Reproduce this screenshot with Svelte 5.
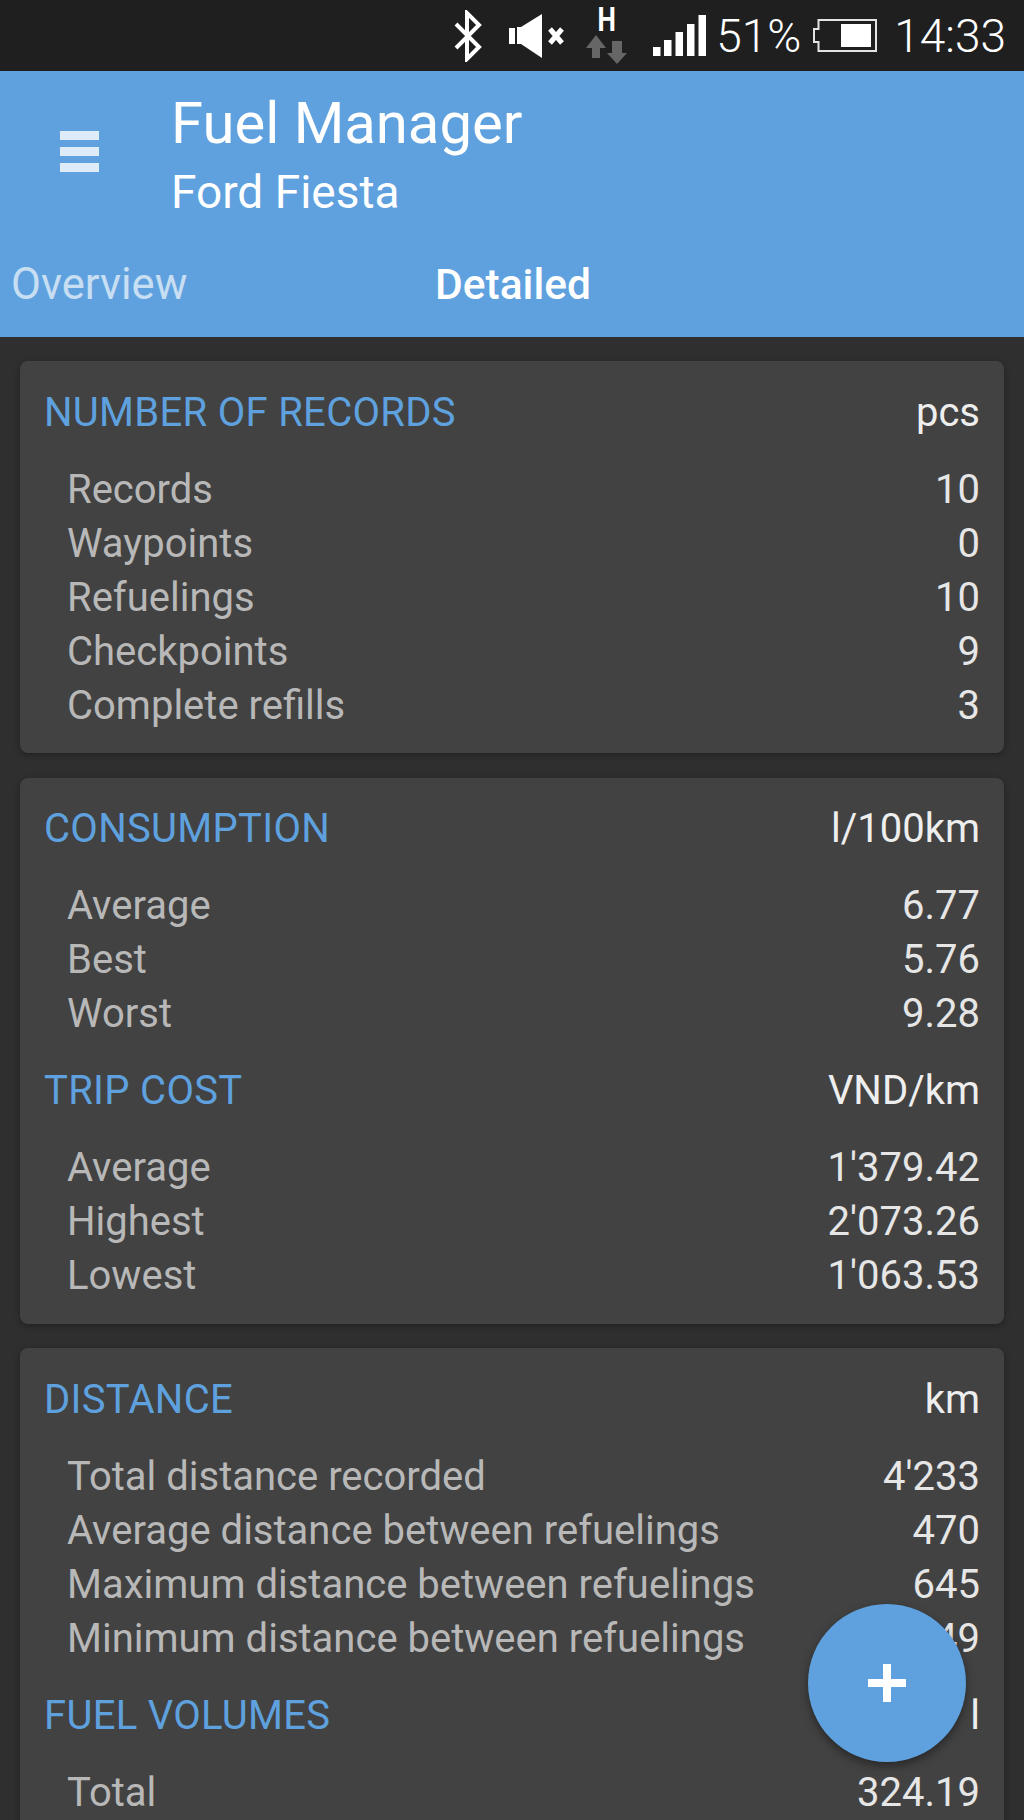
<script>
	const cards = [
		[
			{
				title: 'NUMBER OF RECORDS',
				unit: 'pcs',
				rows: [
					['Records', '10'],
					['Waypoints', '0'],
					['Refuelings', '10'],
					['Checkpoints', '9'],
					['Complete refills', '3']
				]
			}
		],
		[
			{
				title: 'CONSUMPTION',
				unit: 'l/100km',
				rows: [
					['Average', '6.77'],
					['Best', '5.76'],
					['Worst', '9.28']
				]
			},
			{
				title: 'TRIP COST',
				unit: 'VND/km',
				rows: [
					['Average', "1'379.42"],
					['Highest', "2'073.26"],
					['Lowest', "1'063.53"]
				]
			}
		],
		[
			{
				title: 'DISTANCE',
				unit: 'km',
				rows: [
					['Total distance recorded', "4'233"],
					['Average distance between refuelings', '470'],
					['Maximum distance between refuelings', '645'],
					['Minimum distance between refuelings', '349']
				]
			},
			{
				title: 'FUEL VOLUMES',
				unit: 'l',
				rows: [['Total', '324.19']]
			}
		]
	];
</script>

<div class="screen">
	<div class="status">
		<svg class="bt" width="28" height="52" viewBox="0 0 28 52" fill="none" stroke="#fff" stroke-width="4">
			<path d="M2 14 L25 37 L13 49 V3 L25 15 L2 38" />
		</svg>
		<svg class="mute" width="55" height="44" viewBox="0 0 55 44" fill="#fff">
			<path d="M0 14 H6 V30 H0 Z M8 13 H12 L33 0 V44 L12 30 H8 Z" />
			<path d="M41 15 L53 29 M53 15 L41 29" stroke="#fff" stroke-width="5" fill="none" />
		</svg>
		<div class="net">
			<span class="h">H</span>
			<svg width="41" height="29" viewBox="0 0 41 29" fill="#666">
				<path d="M10 0 L20 13 H14 V23 H6 V13 H0 Z" />
				<path d="M26 6 H36 V18 H41 L31 29 L21 18 H26 Z" />
			</svg>
		</div>
		<svg class="signal" width="53" height="41" viewBox="0 0 53 41" fill="#fff">
			<rect x="0" y="32" width="7.5" height="9" />
			<rect x="11" y="25" width="7.5" height="16" />
			<rect x="22.5" y="17" width="7.5" height="24" />
			<rect x="34" y="9" width="7.5" height="32" />
			<rect x="45.5" y="0" width="7.5" height="41" />
		</svg>
		<span class="pct">51%</span>
		<svg class="batt" width="64" height="33" viewBox="0 0 64 33" fill="none">
			<path d="M5.5 1 H63 V32 H5.5 V23 H1 V10 H5.5 Z" stroke="#e4e4e4" stroke-width="2" />
			<rect x="28" y="5" width="30" height="23" fill="#fff" />
		</svg>
		<span class="time">14:33</span>
	</div>

	<header class="appbar">
		<div class="top">
			<div class="menu" aria-hidden="true"><i></i><i></i><i></i></div>
			<div class="titles">
				<div class="title">Fuel Manager</div>
				<div class="subtitle">Ford Fiesta</div>
			</div>
		</div>
		<nav class="tabs">
			<span class="tab">Overview</span>
			<span class="tab active">Detailed</span>
		</nav>
	</header>

	<main class="content">
		{#each cards as sections}
			<section class="card">
				{#each sections as section}
					<div class="head">
						<span class="name">{section.title}</span>
						<span class="unit">{section.unit}</span>
					</div>
					<div class="rows">
						{#each section.rows as row}
							<div class="row">
								<span class="label">{row[0]}</span>
								<span class="value">{row[1]}</span>
							</div>
						{/each}
					</div>
				{/each}
			</section>
		{/each}
	</main>

	<button class="fab" aria-label="Add">
		<svg width="38" height="38" viewBox="0 0 38 38" fill="#fff">
			<path d="M15 0 H23 V15 H38 V23 H23 V38 H15 V23 H0 V15 H15 Z" />
		</svg>
	</button>
</div>

<style>
	:global(body) {
		margin: 0;
		background: #2f2f2f;
	}

	.screen {
		position: relative;
		height: 1820px;
		overflow: hidden;
		font-family: Roboto, sans-serif;
		background: #2f2f2f;
	}

	.status {
		display: flex;
		align-items: center;
		justify-content: flex-end;
		height: 71px;
		padding-right: 18px;
		background: #1f1f1f;
		color: #fff;
		font-weight: 300;
		font-size: 46px;
	}

	.bt {
		margin-right: 27px;
	}

	.mute {
		margin-right: 22px;
	}

	.net {
		display: flex;
		flex-direction: column;
		align-items: center;
		margin-right: 26px;
		height: 71px;
	}

	.h {
		display: block;
		font-size: 26px;
		font-weight: 700;
		line-height: 23px;
		margin: 9px 0 3px;
		transform: scaleY(1.25);
	}

	.signal {
		margin-right: 10px;
	}

	.pct {
		margin-right: 12px;
	}

	.batt {
		margin-right: 17px;
	}

	.appbar {
		height: 266px;
		background: #5ea1de;
		color: #fff;
		box-sizing: border-box;
	}

	.top {
		display: flex;
		height: 172px;
	}

	.menu {
		display: flex;
		flex-direction: column;
		justify-content: space-between;
		width: 39px;
		height: 41px;
		margin: 60px 72px 0 60px;
	}

	.menu i {
		display: block;
		height: 9px;
		background: #deebf8;
	}

	.titles {
		padding-top: 20px;
	}

	.title {
		font-size: 58px;
		line-height: 64px;
	}

	.subtitle {
		font-size: 46px;
		line-height: 50px;
		margin-top: 12px;
	}

	.tabs {
		display: flex;
		height: 83px;
		align-items: center;
		padding-left: 11px;
		font-size: 43.5px;
		box-sizing: border-box;
	}

	.tab {
		width: 424px;
		opacity: 0.65;
	}

	.tab.active {
		font-size: 42.5px;
		font-weight: 500;
		opacity: 1;
	}

	.content {
		display: flex;
		flex-direction: column;
		gap: 24.5px;
		padding: 24px 20px 0;
	}

	.card {
		background: #424242;
		border-radius: 8px;
		padding: 24px 24px 21px;
		box-shadow: 0 2px 6px rgba(0, 0, 0, 0.3);
	}

	.head {
		display: flex;
		justify-content: space-between;
		align-items: center;
		height: 54px;
		font-size: 40px;
	}

	.name {
		color: #5ea1de;
		letter-spacing: 0.3px;
	}

	.unit {
		color: #eeeeee;
	}

	.rows {
		margin: 23px 0 23px;
		padding-left: 23px;
	}

	.rows:last-child {
		margin-bottom: 0;
	}

	.row {
		display: flex;
		justify-content: space-between;
		align-items: center;
		height: 54px;
		font-size: 40px;
	}

	.label {
		color: #b8b8b8;
	}

	.value {
		color: #e6e6e6;
	}

	.fab {
		position: absolute;
		left: 808px;
		top: 1604px;
		width: 158px;
		height: 158px;
		padding: 0;
		border: none;
		border-radius: 50%;
		background: #5ea1de;
		box-shadow: 0 4px 10px rgba(0, 0, 0, 0.4);
		display: flex;
		align-items: center;
		justify-content: center;
	}
</style>
